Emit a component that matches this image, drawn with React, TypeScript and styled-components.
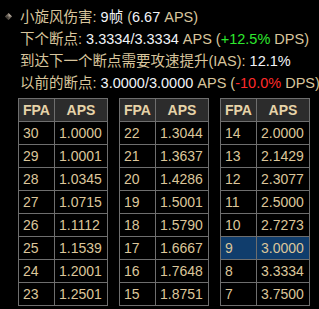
import React from 'react'
import styled, { createGlobalStyle } from 'styled-components'

const GlobalStyle = createGlobalStyle`
  html, body {
    margin: 0;
    padding: 0;
    background: #000;
  }
  body {
    font-family: 'Liberation Sans', Arial, 'Noto Sans CJK SC', sans-serif;
    font-size: 14px;
    color: #d8c59c;
  }
`

type Row = { fpa: number; aps: string }

const tables: Row[][] = [
  [
    { fpa: 30, aps: '1.0000' },
    { fpa: 29, aps: '1.0001' },
    { fpa: 28, aps: '1.0345' },
    { fpa: 27, aps: '1.0715' },
    { fpa: 26, aps: '1.1112' },
    { fpa: 25, aps: '1.1539' },
    { fpa: 24, aps: '1.2001' },
    { fpa: 23, aps: '1.2501' },
  ],
  [
    { fpa: 22, aps: '1.3044' },
    { fpa: 21, aps: '1.3637' },
    { fpa: 20, aps: '1.4286' },
    { fpa: 19, aps: '1.5001' },
    { fpa: 18, aps: '1.5790' },
    { fpa: 17, aps: '1.6667' },
    { fpa: 16, aps: '1.7648' },
    { fpa: 15, aps: '1.8751' },
  ],
  [
    { fpa: 14, aps: '2.0000' },
    { fpa: 13, aps: '2.1429' },
    { fpa: 12, aps: '2.3077' },
    { fpa: 11, aps: '2.5000' },
    { fpa: 10, aps: '2.7273' },
    { fpa: 9, aps: '3.0000' },
    { fpa: 8, aps: '3.3334' },
    { fpa: 7, aps: '3.7500' },
  ],
]

const currentFpa = 9

const App: React.FC = () => {
  return (
    <Wrapper>
      <GlobalStyle />
      <Info>
        <Line>
          <Gem viewBox="0 0 8 8">
            <polygon points="4,0 8,4 4,8 0,4" fill="#6b6258" />
            <polygon points="4,0 8,4 4,4" fill="#b0a698" />
            <polygon points="0,4 4,4 4,8" fill="#3e3a34" />
          </Gem>
          小旋风伤害: <Value>9帧</Value> (<Value>6.67</Value> APS)
        </Line>
        <Line>
          下个断点: <Value>3.3334/3.3334</Value> APS (<Good>+12.5%</Good> DPS)
        </Line>
        <Line>
          到达下一个断点需要攻速提升(IAS): <Value>12.1%</Value>
        </Line>
        <Line>
          以前的断点: <Value>3.0000/3.0000</Value> APS (<Bad>-10.0%</Bad> DPS)
        </Line>
      </Info>
      <Tables>
        {tables.map((rows, i) => (
          <Table key={i}>
            <colgroup>
              <col style={{ width: 36 }} />
              <col style={{ width: 53 }} />
            </colgroup>
            <thead>
              <tr>
                <Th>FPA</Th>
                <Th>APS</Th>
              </tr>
            </thead>
            <tbody>
              {rows.map((r) => (
                <Tr key={r.fpa} $active={r.fpa === currentFpa}>
                  <Td>{r.fpa}</Td>
                  <Td>{r.aps}</Td>
                </Tr>
              ))}
            </tbody>
          </Table>
        ))}
      </Tables>
    </Wrapper>
  )
}

const Wrapper = styled.div`
  width: 319px;
  height: 309px;
  overflow: hidden;
  background: #000;
`

const Info = styled.div`
  padding: 6px 0 0 20px;
`

const Line = styled.div`
  position: relative;
  height: 22px;
  line-height: 22px;
  white-space: nowrap;
  font-size: 14.5px;
  font-family: 'Liberation Sans', Arial, 'Noto Sans CJK SC', sans-serif;
`

const Gem = styled.svg`
  position: absolute;
  left: -15px;
  top: 7px;
  width: 7px;
  height: 7px;
`

const Value = styled.span`
  color: #f2f4f8;
`

const Good = styled.span`
  color: #2ee82e;
`

const Bad = styled.span`
  color: #ff2a2a;
`

const Tables = styled.div`
  display: flex;
  gap: 11px;
  padding: 4px 0 0 18px;
`

const Table = styled.table`
  width: 89px;
  table-layout: fixed;
  border-collapse: collapse;
  border: 1px solid #6e6e6e;
`

const Th = styled.th`
  height: 22px;
  padding: 0;
  background: #2c2c2c;
  border: 1px solid #6e6e6e;
  color: #e6d3a8;
  font-weight: bold;
  font-size: 14px;
  text-align: center;
`

const Tr = styled.tr<{ $active?: boolean }>`
  background: ${(p) => (p.$active ? '#103d6c' : '#000')};
`

const Td = styled.td`
  height: 22px;
  padding: 0 0 0 4px;
  border: 1px solid #6e6e6e;
  color: #dcc69a;
  font-size: 14px;
  text-align: left;
`

export default App
